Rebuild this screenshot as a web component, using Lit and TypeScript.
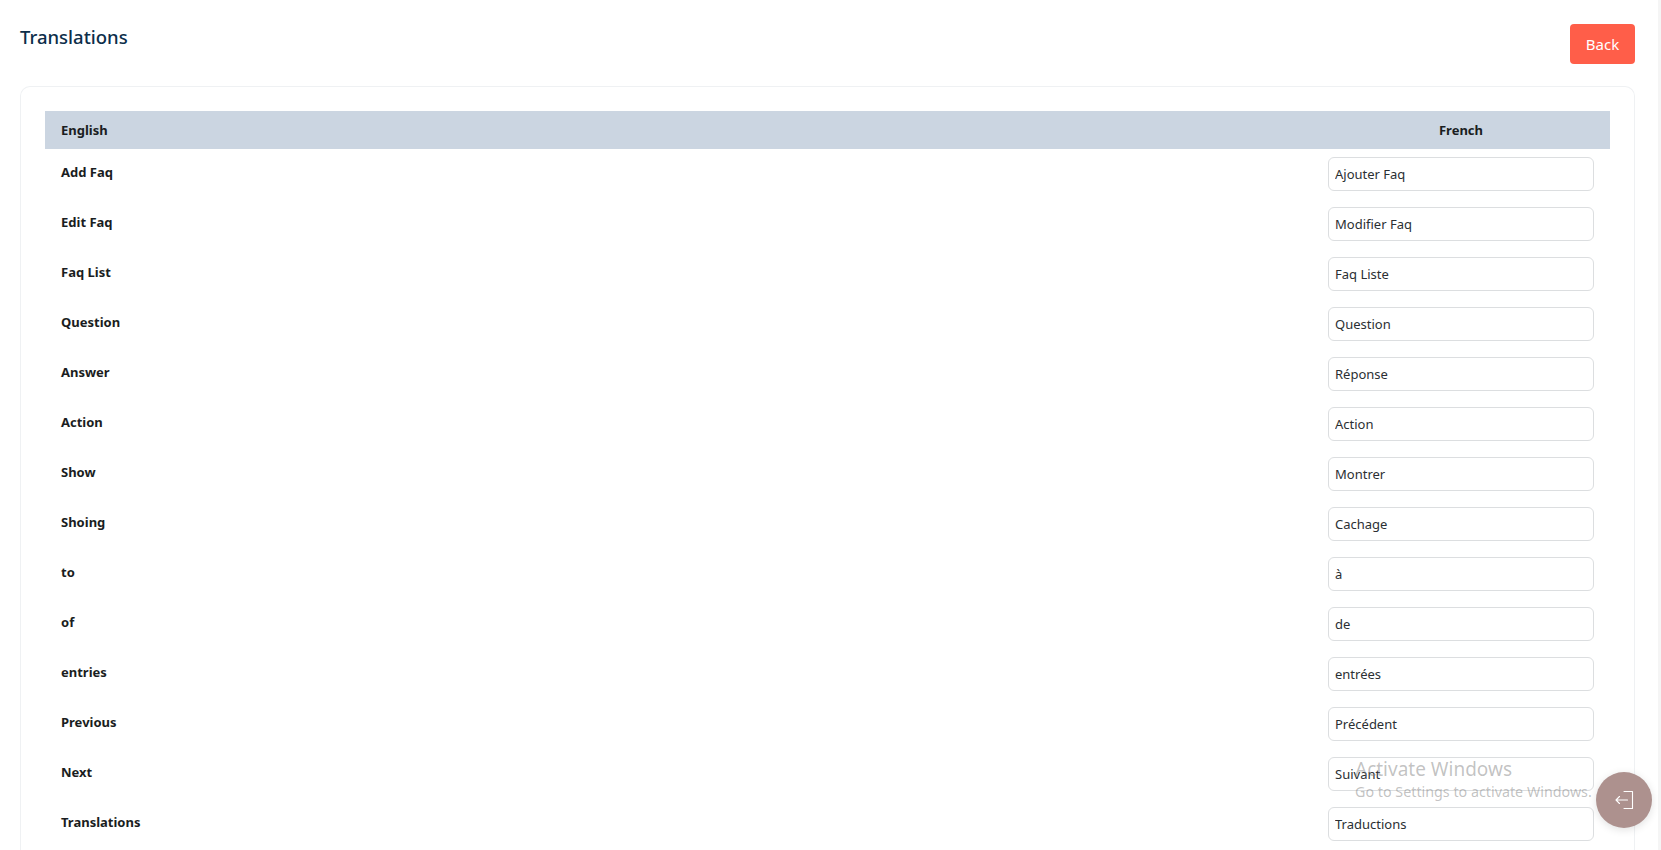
import { LitElement, html, css } from "lit";
import { customElement } from "lit/decorators.js";

const ROWS: [string, string][] = [
  ["Add Faq", "Ajouter Faq"],
  ["Edit Faq", "Modifier Faq"],
  ["Faq List", "Faq Liste"],
  ["Question", "Question"],
  ["Answer", "Réponse"],
  ["Action", "Action"],
  ["Show", "Montrer"],
  ["Shoing", "Cachage"],
  ["to", "à"],
  ["of", "de"],
  ["entries", "entrées"],
  ["Previous", "Précédent"],
  ["Next", "Suivant"],
  ["Translations", "Traductions"],
];

@customElement("app-root")
export class AppRoot extends LitElement {
  static styles = css`
    :host {
      display: block;
      height: 850px;
      overflow: hidden;
      position: relative;
      font-family: "Noto Sans", "Open Sans", sans-serif;
      color: #212529;
      background: #fff;
    }
    .page {
      padding: 24px 26px 0 20px;
      box-sizing: border-box;
    }
    .top {
      display: flex;
      justify-content: space-between;
      align-items: flex-start;
      height: 62px;
    }
    h1 {
      margin: 0;
      font-size: 18.5px;
      font-weight: 500;
      line-height: 26px;
      color: #0c2e4a;
    }
    .back {
      width: 65px;
      height: 40px;
      border: 0;
      border-radius: 4px;
      background: #ff5e49;
      color: #fff;
      font: 15px "Noto Sans", sans-serif;
      padding: 0;
    }
    .card {
      border: 1px solid #eff1f3;
      border-bottom: 0;
      border-radius: 10px 10px 0 0;
      padding: 24px 24px 0;
      height: 800px;
      box-sizing: border-box;
    }
    .row {
      display: grid;
      grid-template-columns: 1fr 266px;
      column-gap: 16px;
      padding: 0 16px;
    }
    .head {
      background: #cbd5e1;
      height: 38px;
      align-items: center;
      font-weight: 700;
      font-size: 13px;
      color: #1a1d21;
    }
    .head .fr {
      text-align: center;
    }
    .body {
      height: 50px;
      padding-top: 8px;
      box-sizing: border-box;
    }
    .body .en {
      font-weight: 700;
      font-size: 13px;
      line-height: 18px;
      padding-top: 6px;
      color: #1a1d21;
    }
    input {
      display: block;
      box-sizing: border-box;
      width: 266px;
      height: 34px;
      border: 1px solid #dcdee0;
      border-radius: 6px;
      background: #fff;
      padding: 0 6px 1px;
      font: 13px "Noto Sans", sans-serif;
      color: #2b2f33;
      outline: none;
    }
    .fab {
      position: absolute;
      left: 1596px;
      top: 772px;
      width: 56px;
      height: 56px;
      border-radius: 50%;
      background: #ad918e;
      box-shadow: 0 2px 8px rgba(0, 0, 0, 0.12);
      display: flex;
      align-items: center;
      justify-content: center;
    }
    .wm {
      position: absolute;
      left: 1355px;
      top: 756px;
      color: rgba(120, 120, 120, 0.45);
      pointer-events: none;
      white-space: nowrap;
      font-family: "Noto Sans", sans-serif;
    }
    .wm b {
      display: block;
      font-weight: 400;
      font-size: 19px;
      line-height: 26px;
    }
    .wm span {
      display: block;
      font-size: 14.3px;
      line-height: 20px;
    }
    .edge {
      position: absolute;
      right: 0;
      top: 0;
      width: 3px;
      height: 850px;
      background: #f5f5f5;
    }
  `;

  render() {
    return html`
      <div class="page">
        <div class="top">
          <h1>Translations</h1>
          <button class="back">Back</button>
        </div>
        <div class="card">
          <div class="row head">
            <div>English</div>
            <div class="fr">French</div>
          </div>
          ${ROWS.map(
            ([en, fr]) => html`
              <div class="row body">
                <div class="en">${en}</div>
                <input .value=${fr} />
              </div>
            `
          )}
        </div>
      </div>
      <div class="edge"></div>
      <div class="wm"><b>Activate Windows</b><span>Go to Settings to activate Windows.</span></div>
      <div class="fab">
        <svg width="20" height="20" viewBox="0 0 20 20" fill="none" stroke="#fff" stroke-width="1.1" stroke-linecap="round" stroke-linejoin="round">
          <path d="M10 1.5h8.5v17H10" />
          <path d="M13.5 10H2M5.5 6.5L2 10l3.5 3.5" />
        </svg>
      </div>
    `;
  }
}
